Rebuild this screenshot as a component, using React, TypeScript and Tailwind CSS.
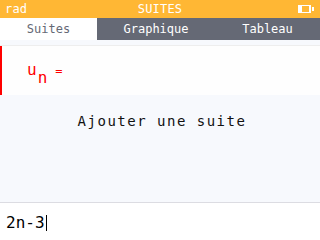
const mono = { fontFamily: '"DejaVu Sans Mono", "Liberation Mono", monospace' };

function Battery() {
  return (
    <svg width="16" height="8" viewBox="0 0 16 8" className="block">
      <rect x="0" y="0" width="4" height="8" fill="#fff" />
      <rect x="4" y="0" width="8" height="1" fill="#fff" />
      <rect x="4" y="7" width="8" height="1" fill="#fff" />
      <rect x="11" y="0" width="2" height="8" fill="#fff" />
      <rect x="14" y="2" width="2" height="4" fill="#fff" />
    </svg>
  );
}

export default function App() {
  return (
    <div className="w-[320px] h-[240px] flex flex-col bg-[#f7f9fd] overflow-hidden" style={mono}>
      {/* status bar */}
      <div className="h-[18px] bg-[#ffb734] grid grid-cols-[1fr_auto_1fr] items-center text-white text-[12px] leading-none tracking-[0.2px]">
        <span className="pl-[5px]">rad</span>
        <span>SUITES</span>
        <div className="flex justify-end pr-[6px]">
          <Battery />
        </div>
      </div>

      {/* tabs */}
      <div className="h-[22px] flex text-[12px] leading-none">
        <div className="w-[97px] bg-white text-[#656975] flex items-center justify-center">Suites</div>
        <div className="w-[118px] bg-[#656975] text-white flex items-center justify-center">Graphique</div>
        <div className="flex-1 bg-[#656975] text-white flex items-center justify-center">Tableau</div>
      </div>

      <div className="flex-1 flex flex-col pt-[5px]">
        <div className="h-[50px] border-t border-[#eeeeee] bg-[#fefefe] flex">
          <div className="w-[2px] bg-[#ff0000]" />
          <div className="pl-[25px] pt-[16px] flex items-start text-[#ff0000]">
            <span className="text-[16px] leading-[16px]">u</span>
            <span className="text-[16px] leading-[16px] relative top-[8px] ml-[1px]">n</span>
            <span className="text-[12px] leading-[16px] ml-[8px] relative top-[1px]">=</span>
          </div>
        </div>
        <div className="h-[52px] flex items-center justify-center pl-[4px] text-[14px] tracking-[1.5px] text-[#111]">
          Ajouter une suite
        </div>
      </div>

      <div className="h-[38px] border-t border-[#dcdce2] bg-white pl-[6px] pt-[12px] flex items-start">
        <span className="text-[16px] leading-[16px] text-black">2n-3</span>
        <span className="w-[1px] h-[16px] bg-black ml-[1px]" />
      </div>
    </div>
  );
}
